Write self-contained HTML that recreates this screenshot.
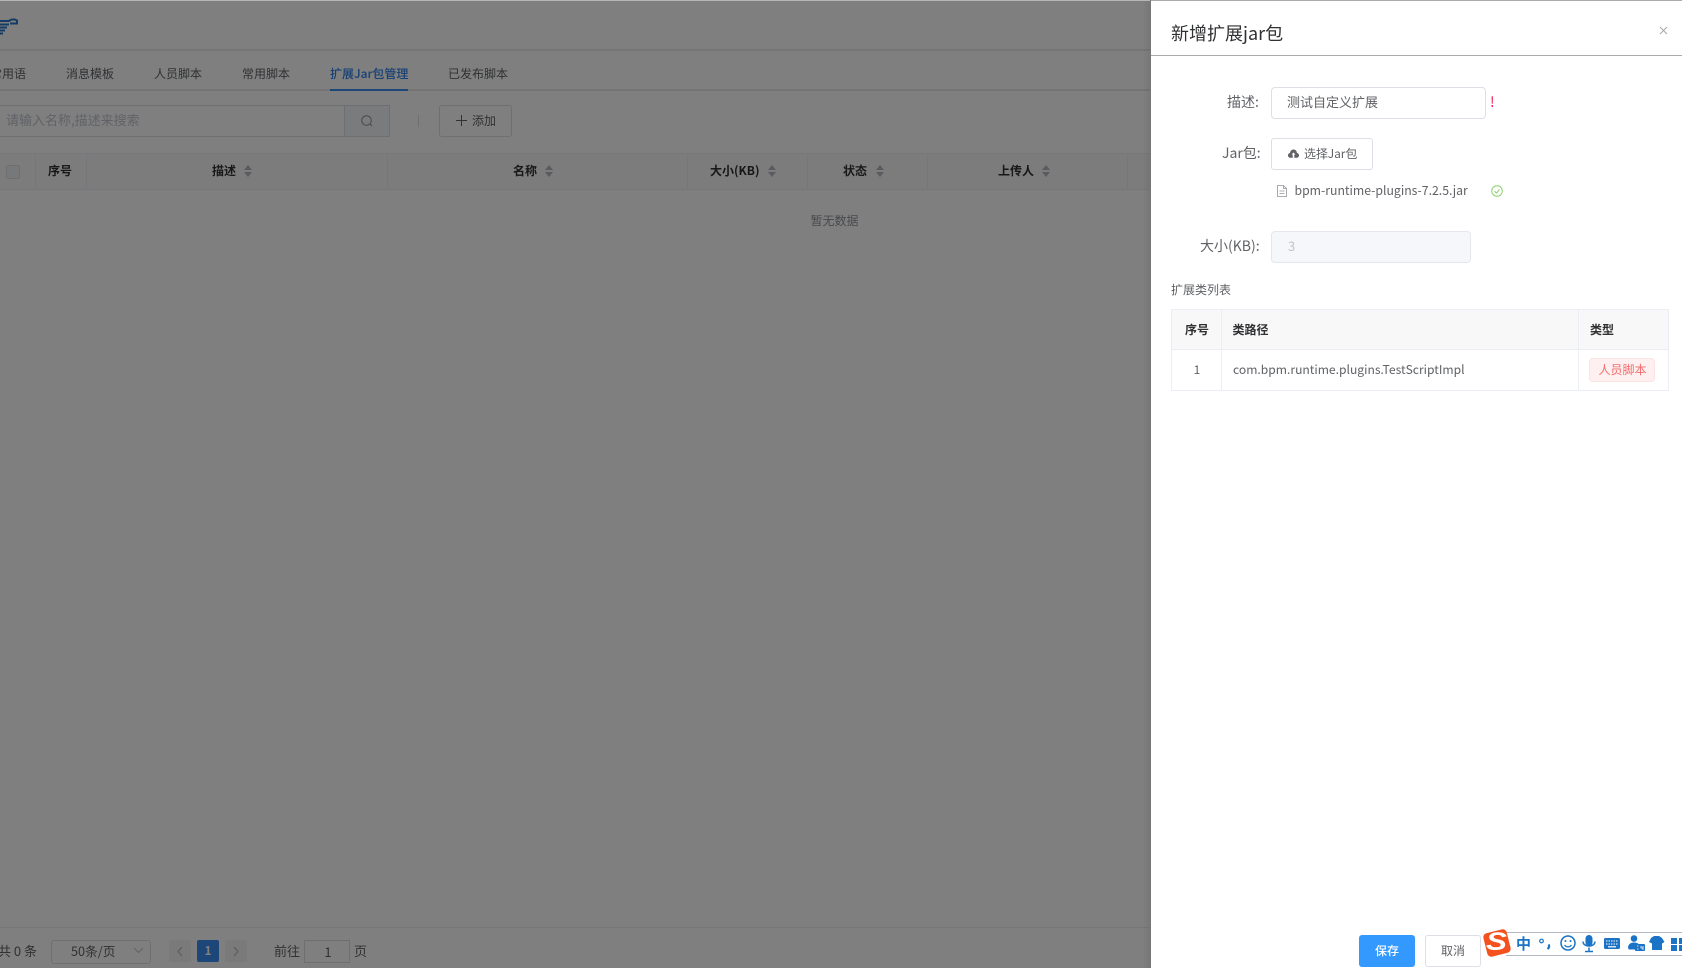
<!DOCTYPE html>
<html><head><meta charset="utf-8"><style>
html,body{margin:0;padding:0;width:1682px;height:968px;overflow:hidden;background:#fff}
body{font-family:"Noto Sans CJK SC","Liberation Sans",sans-serif;font-size:12px;color:#606266;position:relative}
.a{position:absolute;white-space:nowrap;line-height:1}
.b{position:absolute;box-sizing:border-box}
.c{position:absolute;transform:translateX(-50%);white-space:nowrap;line-height:1}
.th{font-weight:700;color:#303133;font-size:12px}
.sort{position:absolute;width:0;height:0}
.sort:before,.sort:after{content:"";position:absolute;left:0;border-left:4.5px solid transparent;border-right:4.5px solid transparent}
.sort:before{top:-6px;border-bottom:5px solid #b4b7bd}
.sort:after{top:1px;border-top:5px solid #b4b7bd}
#ov{position:absolute;left:0;top:0;width:1150px;height:968px;background:rgba(0,0,0,.5)}
</style></head><body>

<!-- page beneath -->
<div class="b" style="left:0;top:49px;width:1151px;height:2px;background:#eaeaea"></div>
<div class="b" style="left:0;top:89px;width:1151px;height:2px;background:#e8e8e8"></div>
<svg class="b" style="left:0;top:17px" width="18" height="20" viewBox="0 0 18 20"><path d="M0 4H9C11 2 15 2 17 3.500V6.500H10M0 7.500H9M0 10.500H7M0 13.500H5M0 16.500H3" stroke="#2a79c9" stroke-width="2" fill="none"/></svg>

<div class="a" style="left:-10px;top:68px;font-size:12px">常用语</div>
<div class="a" style="left:66px;top:68px">消息模板</div>
<div class="a" style="left:154px;top:68px">人员脚本</div>
<div class="a" style="left:242px;top:68px">常用脚本</div>
<div class="a" style="left:330px;top:68px;color:#2f80e8;font-weight:500">扩展Jar包管理</div>
<div class="a" style="left:448px;top:68px">已发布脚本</div>
<div class="b" style="left:330px;top:89px;width:78px;height:2px;background:#3a8ef0"></div>

<div class="b" style="left:-5px;top:105px;width:350px;height:32px;border:1px solid #dcdfe6;background:#fff"></div>
<div class="a" style="left:6px;top:113px;font-size:13px;color:#c0c4cc">请输入名称,描述来搜索</div>
<div class="b" style="left:344px;top:105px;width:46px;height:32px;border:1px solid #dcdfe6;background:#f5f7fa"></div>
<svg class="b" style="left:360px;top:114px" width="14" height="14" viewBox="0 0 14 14"><circle cx="6.5" cy="6.5" r="4.8" fill="none" stroke="#909399" stroke-width="1"/><path d="M10 10l2 2" stroke="#909399"/></svg>
<div class="b" style="left:418px;top:115px;width:1px;height:12px;background:#dcdfe6"></div>
<div class="b" style="left:439px;top:105px;width:73px;height:32px;border:1px solid #dcdfe6;border-radius:3px;background:#fff"></div>
<svg class="b" style="left:456px;top:115px" width="11" height="11"><path d="M5.500 0v11M0 5.500h11" stroke="#606266"/></svg>
<div class="a" style="left:472px;top:115px">添加</div>

<div class="b" style="left:0;top:153px;width:1151px;height:37px;background:#f8f8f8;border-top:1px solid #ebeef5;border-bottom:1px solid #ebeef5"></div>
<div class="b" style="left:35px;top:153px;width:1px;height:37px;background:#ebeef5"></div>
<div class="b" style="left:86px;top:153px;width:1px;height:37px;background:#ebeef5"></div>
<div class="b" style="left:387px;top:153px;width:1px;height:37px;background:#ebeef5"></div>
<div class="b" style="left:687px;top:153px;width:1px;height:37px;background:#ebeef5"></div>
<div class="b" style="left:807px;top:153px;width:1px;height:37px;background:#ebeef5"></div>
<div class="b" style="left:927px;top:153px;width:1px;height:37px;background:#ebeef5"></div>
<div class="b" style="left:1127px;top:153px;width:1px;height:37px;background:#ebeef5"></div>
<div class="b" style="left:6px;top:165px;width:14px;height:14px;border:1px solid #dcdfe6;border-radius:2px;background:#eef0f5"></div>
<div class="a th" style="left:48px;top:165px">序号</div>
<div class="a th" style="left:212px;top:165px">描述</div><span class="sort" style="left:243.500px;top:171px"></span>
<div class="a th" style="left:513px;top:165px">名称</div><span class="sort" style="left:544.500px;top:171px"></span>
<div class="a th" style="left:710px;top:165px">大小(KB)</div><span class="sort" style="left:767.500px;top:171px"></span>
<div class="a th" style="left:843px;top:165px">状态</div><span class="sort" style="left:875.500px;top:171px"></span>
<div class="a th" style="left:998px;top:165px">上传人</div><span class="sort" style="left:1041.500px;top:171px"></span>
<div class="a" style="left:810.500px;top:215px;color:#909399">暂无数据</div>

<div class="b" style="left:0;top:927px;width:1151px;height:1px;background:#ebeef5"></div>
<div class="a" style="left:-2px;top:944px;font-size:13px">共 0 条</div>
<div class="b" style="left:51px;top:940px;width:100px;height:24px;border:1px solid #dcdfe6;border-radius:3px;background:#fff"></div>
<div class="a" style="left:71px;top:945px;font-size:12.700px">50条/页</div>
<svg class="b" style="left:133px;top:947px" width="11" height="7"><path d="M1 1l4.500 4.500L10 1" fill="none" stroke="#c0c4cc"/></svg>
<div class="b" style="left:169px;top:940px;width:22px;height:22px;background:#f4f4f5;border-radius:2px"></div>
<svg class="b" style="left:176px;top:946px" width="8" height="11"><path d="M6 1L2 5.500 6 10" fill="none" stroke="#c0c4cc" stroke-width="1.500"/></svg>
<div class="b" style="left:197px;top:940px;width:22px;height:22px;background:#3a8ef0;border-radius:2px"></div>
<div class="c" style="left:208px;top:945px;color:#fff;font-weight:700">1</div>
<div class="b" style="left:225px;top:940px;width:22px;height:22px;background:#f4f4f5;border-radius:2px"></div>
<svg class="b" style="left:232px;top:946px" width="8" height="11"><path d="M2 1l4 4.500L2 10" fill="none" stroke="#c0c4cc" stroke-width="1.500"/></svg>
<div class="a" style="left:274px;top:944px;font-size:13px">前往</div>
<div class="b" style="left:304px;top:940px;width:46px;height:23px;border:1px solid #dcdfe6;background:#fff"></div>
<div class="c" style="left:328px;top:945px;font-size:13px">1</div>
<div class="a" style="left:354px;top:944px;font-size:13px">页</div>

<div id="ov"></div>
<div class="b" style="left:1142px;top:0;width:8px;height:968px;background:linear-gradient(90deg,rgba(0,0,0,0),rgba(0,0,0,.06))"></div>
<div class="b" style="left:0;top:0;width:1682px;height:1px;background:#b5b5b5"></div>

<!-- drawer -->
<div class="b" style="left:1150px;top:0;width:1px;height:968px;background:#777"></div>
<div class="b" style="left:1151px;top:0;width:531px;height:1px;background:#aaa"></div>
<div class="a" style="left:1171px;top:24px;font-size:18px;color:#303133">新增扩展jar包</div>
<svg class="b" style="left:1659px;top:26px" width="9" height="9"><path d="M1 1l7 7M8 1l-7 7" stroke="#a6a9ad" stroke-width="1"/></svg>
<div class="b" style="left:1151px;top:55px;width:531px;height:1px;background:#aaa"></div>

<div class="a" style="left:1227px;top:95px;font-size:14px">描述:</div>
<div class="b" style="left:1271px;top:87px;width:215px;height:32px;border:1px solid #dcdfe6;border-radius:4px"></div>
<div class="a" style="left:1287px;top:95px;font-size:13px">测试自定义扩展</div>
<div class="a" style="left:1490px;top:95px;font-size:14px;color:#f0134d;font-weight:400">!</div>

<div class="a" style="left:1222px;top:146px;font-size:14px">Jar包:</div>
<div class="b" style="left:1271px;top:138px;width:102px;height:32px;border:1px solid #dcdfe6;border-radius:3px"></div>
<svg class="b" style="left:1288px;top:149px" width="11" height="9" viewBox="0 0 11 9"><path d="M0 6.200C0 5 .8 4.200 2 4 2.300 1.800 3.800.5 5.500.5S8.700 1.800 9 4C10.200 4.200 11 5 11 6.200 11 7.800 10 8.800 8.500 8.800H2.500C1 8.800 0 7.800 0 6.200Z" fill="#606266"/><path d="M3.500 5.500L5.500 3.500 7.500 5.500H6.300V8.800H4.700V5.500Z" fill="#fff"/></svg>
<div class="a" style="left:1304px;top:148px;font-size:12px;letter-spacing:-.1px">选择Jar包</div>
<svg class="b" style="left:1277px;top:185px" width="10" height="12" viewBox="0 0 10 12"><path d="M.5.500H6.500L9.500 3.500V11.500H.5ZM6.500.500V3.500H9.500M2.500 6H7.500M2.500 8.500H7.500" fill="none" stroke="#909399" stroke-width=".8"/></svg>
<div class="a" style="left:1294.500px;top:184px;font-size:12.250px">bpm-runtime-plugins-7.2.5.jar</div>
<svg class="b" style="left:1491px;top:185px" width="12" height="12" viewBox="0 0 12 12"><circle cx="6" cy="6" r="5.300" fill="none" stroke="#8ed16f"/><path d="M3.500 6.200l2 1.800 3-3.500" fill="none" stroke="#8ed16f"/></svg>

<div class="a" style="left:1200px;top:239px;font-size:14px">大小(KB):</div>
<div class="b" style="left:1271px;top:231px;width:200px;height:32px;border:1px solid #e4e7ed;border-radius:4px;background:#f5f7fa"></div>
<div class="a" style="left:1288px;top:239px;font-size:13px;color:#c0c4cc">3</div>

<div class="a" style="left:1171px;top:284px;font-size:12px">扩展类列表</div>

<div class="b" style="left:1171px;top:309px;width:498px;height:82px;border:1px solid #ebeef5"></div>
<div class="b" style="left:1172px;top:310px;width:496px;height:39px;background:#f8f8f8"></div>
<div class="b" style="left:1172px;top:349px;width:496px;height:1px;background:#ebeef5"></div>
<div class="b" style="left:1221px;top:310px;width:1px;height:80px;background:#ebeef5"></div>
<div class="b" style="left:1578px;top:310px;width:1px;height:80px;background:#ebeef5"></div>
<div class="a th" style="left:1185px;top:324px">序号</div>
<div class="a th" style="left:1232.500px;top:324px">类路径</div>
<div class="a th" style="left:1590px;top:324px">类型</div>
<div class="c" style="left:1197px;top:364px">1</div>
<div class="a" style="left:1233px;top:364px;font-size:12.120px">com.bpm.runtime.plugins.TestScriptImpl</div>
<div class="b" style="left:1589px;top:358px;width:66px;height:24px;background:#fef0f0;border:1px solid #fde2e2;border-radius:4px"></div>
<div class="a" style="left:1598.500px;top:364px;color:#f56c6c">人员脚本</div>

<div class="b" style="left:1359px;top:935px;width:56px;height:32px;background:#3399ff;border-radius:3px"></div>
<div class="a" style="left:1375px;top:945px;color:#fff;font-weight:500">保存</div>
<div class="b" style="left:1425px;top:935px;width:56px;height:32px;border:1px solid #dcdfe6;border-radius:3px;background:#fff"></div>
<div class="a" style="left:1441px;top:945px">取消</div>

<!-- IME toolbar -->
<div class="b" style="left:1506px;top:932px;width:176px;height:24px;background:#fff;border-top:1px solid #b4b8c4;border-bottom:1px solid #b4b8c4"></div>
<div class="b" style="left:1485px;top:931px;width:24px;height:24px;background:#f4511e;border-radius:4px;transform:rotate(-14deg)"></div>
<div class="a" style="left:1486px;top:930px;font-size:25px;font-weight:700;font-style:italic;color:#fff;font-family:'Liberation Sans',sans-serif;transform:scaleX(1.25);transform-origin:left">S</div>
<div class="a" style="left:1516px;top:936px;font-size:15px;font-weight:700;color:#1a73c4">中</div>
<svg class="b" style="left:1538px;top:934px" width="144" height="20" viewBox="0 0 144 20">
<circle cx="3.500" cy="7" r="1.800" fill="none" stroke="#1a73c4" stroke-width="1.200"/>
<path d="M10.500 10.500c1 1 1 3-1 4.500" fill="none" stroke="#1a73c4" stroke-width="2.200"/>
<circle cx="30" cy="9" r="7" fill="none" stroke="#1a73c4" stroke-width="1.500"/><circle cx="27.500" cy="7" r="1" fill="#1a73c4"/><circle cx="32.500" cy="7" r="1" fill="#1a73c4"/><path d="M26.500 11c2 2.500 5 2.500 7 0" fill="none" stroke="#1a73c4" stroke-width="1.200"/>
<rect x="47.500" y="1" width="7" height="11" rx="3.500" fill="#1a73c4"/><path d="M45 7.500c0 6 12 6 12 0M51 13.500V17M47 17.500H55" fill="none" stroke="#1a73c4" stroke-width="1.500"/>
<rect x="66" y="4" width="16" height="11" rx="1.500" fill="#1a73c4"/><path d="M68 7h12M68 10h12" stroke="#fff" stroke-dasharray="1.500 1"/><path d="M70 12.800h8" stroke="#fff" stroke-width="1.200"/>
<g transform="translate(5 1)"><circle cx="91" cy="3.500" r="3.300" fill="#1a73c4"/><path d="M85 13c0-4 3-5.500 6-5.500 2 0 4 .5 5 2H93v5H86Z" fill="#1a73c4"/><rect x="92" y="9" width="10" height="7" rx="1" fill="#1a73c4"/><path d="M94 11h1.500M94 14h1.500M98 11v2h2M100 11v4" stroke="#fff" stroke-width=".8" fill="none"/></g>
<g transform="translate(4 1)"><path d="M109 3l3-2h5l3 2 2.500 4-2.500 1.500V15h-10V8.500L107 7Z" fill="#1a73c4"/></g>
<rect x="133" y="4" width="6" height="6" fill="#1a73c4"/><rect x="141" y="4" width="6" height="6" fill="#1a73c4"/><rect x="133" y="11" width="6" height="6" fill="#1a73c4"/><rect x="141" y="11" width="6" height="6" fill="#1a73c4"/>
</svg>
</body></html>
